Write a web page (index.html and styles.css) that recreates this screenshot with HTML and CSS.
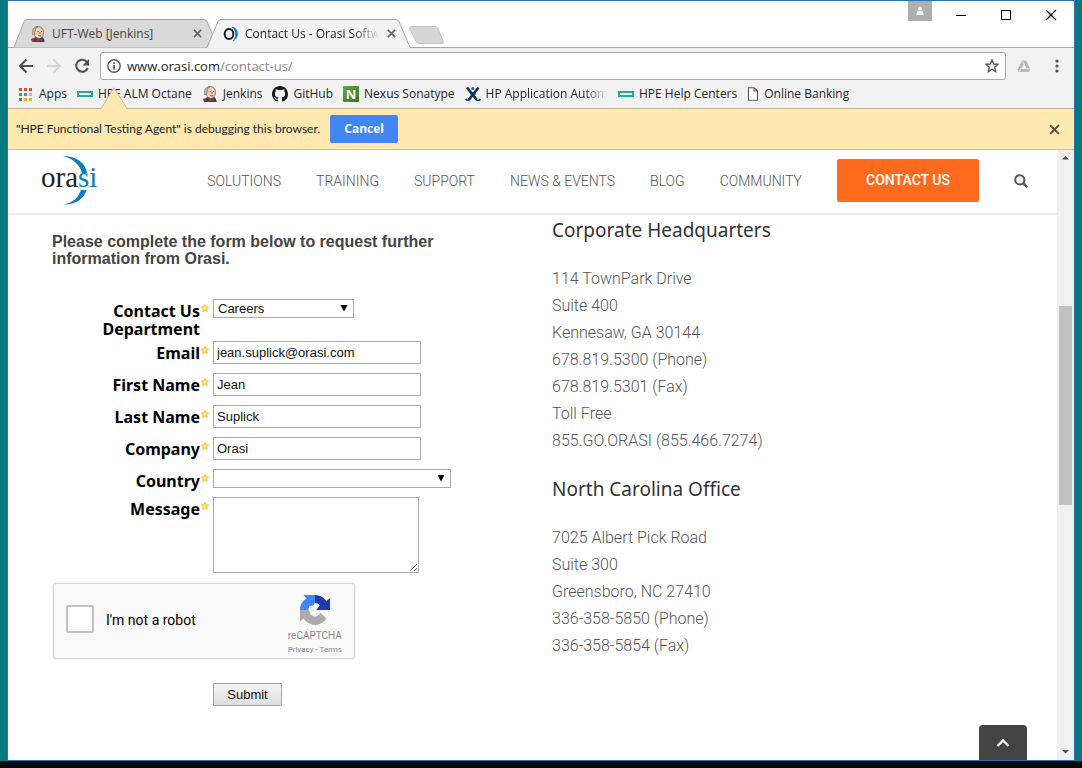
FILE: index.html
```html
<!DOCTYPE html>
<html lang="en">
<head>
<meta charset="utf-8">
<meta name="viewport" content="width=device-width, initial-scale=1">
<title>Contact Us - Orasi Software</title>
<link rel="stylesheet" href="styles.css">
</head>
<body class="desktop">
<svg class="defs" width="0" height="0" aria-hidden="true">
  <defs>
    <symbol id="jenkins" viewBox="0 0 16 16">
      <path d="M2 16c0-3 2-4.500 4-5l5-.5c2 .6 3.500 2.500 3.600 5.500z" fill="#3c434d"/>
      <path d="M3.500 5C3.500 2 5.500.6 8.500.6S13.600 3 13.500 6.500c0 3.200-2 6-4.600 6S3.500 9.500 3.500 5z" fill="#eccfb8" stroke="#4a4038" stroke-width=".6"/>
      <path d="M2.800 9C1.300 4 4 .6 8 .6c-2 .8-2.400 2-2.400 3.400 0 1.500-1 2-1 4z" fill="#cbbba9" stroke="#5c5047" stroke-width=".5"/>
      <path d="M7.500 5.500h1.200M11 5.500h1.200M8.300 9.300c1 .7 2.200.7 3 .1M10 6v1.700" fill="none" stroke="#46342b" stroke-width=".8"/>
      <path d="M6.500 12.500l2.500 1 2.700-1V15L9 14.200 6.500 15.400z" fill="#a8423b"/>
      <path d="M1 13l2.500-1 1 3-2.500 1z" fill="#b32c2b"/>
    </symbol>
    <symbol id="hpe" viewBox="0 0 16 6">
      <path d="M1 1h14v4H1z" fill="#fff" stroke="#1faf91" stroke-width="2"/>
    </symbol>
    <symbol id="star" viewBox="0 0 8 8">
      <path d="M4 .3l1.100 2.300 2.600.4-1.900 1.900.5 2.700L4 6.400 1.700 7.600l.5-2.700L.3 3l2.600-.4z" fill="#ffe27a" stroke="#f3bd35" stroke-width=".8"/>
    </symbol>
    <symbol id="cross" viewBox="0 0 10 10">
      <path d="M1 1l8 8M9 1L1 9" fill="none" stroke="currentColor" stroke-width="1.800"/>
    </symbol>
    <symbol id="down" viewBox="0 0 8 8"><path d="M.5 1h7L4 7.500z" fill="#000"/></symbol>
  </defs>
</svg>

<div class="window">
  <div class="tabstrip">
    <div class="tab">
      <svg class="tab-shape" viewBox="0 0 206 29" preserveAspectRatio="none" aria-hidden="true"><path d="M0 28.500h1L11 2.500Q12 .5 14 .5H191Q193 .5 194 2.500L205 28.500h1" fill="#d9d9d9" stroke="#a3a3a3"/></svg>
      <svg class="favicon" aria-hidden="true"><use href="#jenkins"/></svg>
      <span class="tab-title">UFT-Web [Jenkins]</span>
      <button class="tab-close" aria-label="Close tab"><svg width="9" height="9"><use href="#cross"/></svg></button>
    </div>
    <div class="tab tab-active">
      <svg class="tab-shape" viewBox="0 0 206 29" preserveAspectRatio="none" aria-hidden="true"><path d="M0 29v-.5h1L12 2.500Q13 .5 15 .5H190Q192 .5 193 2.500L204 28.500h2v.5z" fill="#f2f2f2"/><path d="M0 28.500h1L12 2.500Q13 .5 15 .5H190Q192 .5 193 2.500L204 28.500h2" fill="none" stroke="#a3a3a3"/></svg>
      <svg class="favicon" viewBox="0 0 16 16" aria-hidden="true"><ellipse cx="6" cy="8" rx="4.400" ry="5" fill="none" stroke="#111" stroke-width="1.900"/><path d="M9 .8c6 1.200 8.500 9.600 1 14.400 3.800-4.500 3.500-10.500-1-14.400z" fill="#1379bd" stroke="#1379bd" stroke-width=".6"/></svg>
      <span class="tab-title tab-title-long">Contact Us - Orasi Softw</span>
      <button class="tab-close" aria-label="Close tab"><svg width="9" height="9"><use href="#cross"/></svg></button>
    </div>
    <button class="new-tab" aria-label="New tab"><svg width="35" height="18" viewBox="0 0 35 18"><path d="M2 .5h24q2 0 3 2l5 12q1 3-1 3H10q-2 0-3-2L1 3Q0 .5 2 .5z" fill="#d5d5d5" stroke="#c4c4c4"/></svg></button>
    <div class="controls">
      <button class="profile" aria-label="Profile"><svg width="8" height="10" viewBox="0 0 8 10"><circle cx="4" cy="2.500" r="2" fill="#fff"/><path d="M.5 9V7.500C.5 5.500 2 5 4 5s3.500.5 3.500 2.500V9z" fill="#fff"/></svg></button>
      <button class="control" aria-label="Minimize"><svg width="12" height="12"><path d="M1 6.500h10" stroke="#000"/></svg></button>
      <button class="control" aria-label="Maximize"><svg width="12" height="12"><path d="M1.500 1.500h9v9h-9z" fill="none" stroke="#000"/></svg></button>
      <button class="control" aria-label="Close"><svg width="12" height="12"><path d="M1 1l10 10M11 1L1 11" stroke="#000" stroke-width="1.200"/></svg></button>
    </div>
  </div>

  <div class="toolbar">
    <button class="tool" aria-label="Back"><svg width="16" height="16" viewBox="0 0 16 16"><path d="M15 8H2M8.500 1.500L2 8l6.500 6.500" fill="none" stroke="#505050" stroke-width="2"/></svg></button>
    <button class="tool" aria-label="Forward"><svg width="16" height="16" viewBox="0 0 16 16"><path d="M1 8h13M7.500 1.500L14 8l-6.500 6.500" fill="none" stroke="#d3d3d3" stroke-width="2"/></svg></button>
    <button class="tool" aria-label="Reload"><svg width="16" height="16" viewBox="0 0 16 16"><path d="M13 4A6 6 0 1 0 13.800 10" fill="none" stroke="#505050" stroke-width="2.100"/><path d="M15 1v6.500H8.500z" fill="#505050"/></svg></button>
    <div class="omnibox">
      <svg width="16" height="16" viewBox="0 0 16 16" aria-hidden="true"><circle cx="8" cy="8" r="6.200" fill="none" stroke="#555" stroke-width="1.400"/><path d="M8 7v4.500M8 4.300v1.600" stroke="#555" stroke-width="1.700"/></svg>
      <span class="url">www.orasi.com<span class="url-path">/contact-us/</span></span>
      <button class="bare" aria-label="Bookmark this page"><svg width="16" height="16" viewBox="0 0 16 16"><path d="M8 2l1.700 4 4.300.4-3.300 2.900 1 4.200L8 11.300l-3.700 2.200 1-4.200L2 6.400 6.300 6z" fill="none" stroke="#555" stroke-width="1.400"/></svg></button>
    </div>
    <button class="tool" aria-label="Drive"><svg width="16" height="16" viewBox="0 0 16 16"><path d="M6 2.500h4l4.500 9-1.500 2.500H3l-1.500-2.500z" fill="#b9b9b9"/><path d="M8 6l2.800 5H5.200z" fill="#f2f2f2"/><path d="M6 2.500L8.500 7M11 11h4M3 14l2.500-4" stroke="#e5e5e5"/></svg></button>
    <button class="tool" aria-label="Menu"><svg width="16" height="16" viewBox="0 0 16 16"><g fill="#505050"><circle cx="8" cy="3" r="1.600"/><circle cx="8" cy="8" r="1.600"/><circle cx="8" cy="13" r="1.600"/></g></svg></button>
  </div>

  <nav class="bookmarks" aria-label="Bookmarks">
    <a class="bookmark" href="#"><svg width="16" height="15" viewBox="0 0 16 15"><path d="M1 1h3v3H1zM6 1h3v3H6zM11 1h3v3h-3z" fill="#dc4b3e"/><path d="M1 6h3v3H1z" fill="#32a350"/><path d="M6 6h3v3H6z" fill="#4285f4"/><path d="M11 6h3v3h-3z" fill="#f2b01e"/><path d="M1 11h3v3H1z" fill="#32a350"/><path d="M6 11h3v3H6zM11 11h3v3h-3z" fill="#f2b01e"/></svg>Apps</a>
    <a class="bookmark" href="#"><svg width="16" height="6"><use href="#hpe"/></svg>HPE ALM Octane</a>
    <a class="bookmark" href="#"><svg width="16" height="16"><use href="#jenkins"/></svg>Jenkins</a>
    <a class="bookmark" href="#"><svg width="16" height="16" viewBox="0 0 16 16"><path fill="#191717" d="M8 0C3.580 0 0 3.580 0 8c0 3.540 2.290 6.530 5.470 7.590.4.070.55-.17.55-.38 0-.19-.01-.82-.01-1.490-2.010.37-2.530-.49-2.690-.94-.09-.23-.48-.94-.82-1.130-.28-.15-.68-.52-.01-.53.63-.01 1.080.58 1.230.82.720 1.210 1.870.87 2.330.66.070-.52.280-.87.510-1.070-1.780-.2-3.640-.89-3.640-3.950 0-.87.310-1.590.82-2.150-.08-.2-.36-1.020.08-2.120 0 0 .67-.21 2.200.82A7.600 7.600 0 0 1 8 3.860c.68 0 1.360.09 2 .27 1.530-1.040 2.200-.82 2.200-.82.440 1.100.160 1.920.080 2.120.510.560.820 1.270.820 2.150 0 3.070-1.870 3.750-3.650 3.950.290.250.540.730.540 1.480 0 1.070-.01 1.930-.01 2.200 0 .21.150.46.550.38A8 8 0 0 0 16 8c0-4.420-3.580-8-8-8z"/></svg>GitHub</a>
    <a class="bookmark" href="#"><span class="nexus-icon" aria-hidden="true">N</span>Nexus Sonatype</a>
    <a class="bookmark" href="#"><svg width="16" height="16" viewBox="0 0 16 16"><path d="M2 1.500l9.500 12M13.500 1.500L4 13.500" stroke="#12305c" stroke-width="2.600"/><path d="M5.500 7.500h5" stroke="#12305c" stroke-width="2.500"/><circle cx="7.800" cy="2.500" r="1.600" fill="#2e5c94"/><path d="M.5 13q2.500 2.500 4.500 0M10.500 13q2.500 3 5 0" fill="none" stroke="#12305c" stroke-width="1.700"/></svg><span class="fade">HP Application Autom</span></a>
    <a class="bookmark" href="#"><svg width="16" height="6"><use href="#hpe"/></svg>HPE Help Centers</a>
    <a class="bookmark" href="#"><svg width="12" height="14" viewBox="0 0 12 14"><path d="M1.500.7h5.500L10.500 4v9.300h-9zM7 .7V4h3.500" fill="#fff" stroke="#555" stroke-width="1.100"/></svg>Online Banking</a>
  </nav>

  <div class="infobar">
    <svg class="infobar-arrow" width="28" height="23" viewBox="0 0 28 23" aria-hidden="true"><path d="M0 23v-1L1 21.500 14 .8 27 21.500l1 .5v1z" fill="#ffe9b1"/><path d="M0 22l1-.5L14 .8 27 21.500l1 .5" fill="none" stroke="#c9bb97"/></svg>
    <span class="infobar-text">"HPE Functional Testing Agent" is debugging this browser.</span>
    <button class="cancel">Cancel</button>
    <button class="bare infobar-close" aria-label="Dismiss"><svg width="11" height="11"><use href="#cross"/></svg></button>
  </div>

  <div class="viewport">
    <div class="page">
      <header class="site-header">
        <svg class="logo" width="58" height="52" viewBox="0 0 58 52" role="img" aria-label="orasi">
          <path d="M22 1C35 1 45 8 46 18H41C39 10 33 4 22 1zM22 49.500C35 50 43.500 43 45.500 35H40C37 43 32 48 22 49.500z" fill="#0b7cb8"/>
          <text x="0" y="32" class="logo-text">ora<tspan class="logo-blue">si</tspan></text>
        </svg>
        <nav class="site-nav">
          <a href="#">SOLUTIONS</a><a href="#">TRAINING</a><a href="#">SUPPORT</a><a href="#">NEWS &amp; EVENTS</a><a href="#">BLOG</a><a href="#">COMMUNITY</a>
          <a href="#" class="contact-link">CONTACT US</a>
          <button class="bare" aria-label="Search"><svg width="14" height="14" viewBox="0 0 14 14"><circle cx="5.800" cy="5.800" r="4.600" fill="none" stroke="#555" stroke-width="2"/><path d="M9.200 9.200l4 4" stroke="#555" stroke-width="2.400"/></svg></button>
        </nav>
      </header>

      <main class="content">
        <form class="form">
          <h2 class="form-title">Please complete the form below to request further information from Orasi.</h2>
          <div class="row">
            <label for="dept">Contact Us Department</label><svg class="required"><use href="#star"/></svg>
            <div class="field"><div class="select select-short"><select id="dept"><option>Careers</option></select><svg class="select-arrow"><use href="#down"/></svg></div></div>
          </div>
          <div class="row">
            <label for="email">Email</label><svg class="required"><use href="#star"/></svg>
            <div class="field"><input class="text" id="email" type="text" value="jean.suplick@orasi.com"></div>
          </div>
          <div class="row">
            <label for="first">First Name</label><svg class="required"><use href="#star"/></svg>
            <div class="field"><input class="text" id="first" type="text" value="Jean"></div>
          </div>
          <div class="row">
            <label for="last">Last Name</label><svg class="required"><use href="#star"/></svg>
            <div class="field"><input class="text" id="last" type="text" value="Suplick"></div>
          </div>
          <div class="row">
            <label for="company">Company</label><svg class="required"><use href="#star"/></svg>
            <div class="field"><input class="text" id="company" type="text" value="Orasi"></div>
          </div>
          <div class="row">
            <label for="country">Country</label><svg class="required"><use href="#star"/></svg>
            <div class="field"><div class="select"><select id="country"><option></option></select><svg class="select-arrow"><use href="#down"/></svg></div></div>
          </div>
          <div class="row">
            <label for="message">Message</label><svg class="required"><use href="#star"/></svg>
            <div class="field"><textarea class="message" id="message"></textarea></div>
          </div>
          <div class="captcha">
            <input class="captcha-box" id="robot" type="checkbox">
            <label for="robot">I'm not a robot</label>
            <div class="captcha-brand">
              <svg width="32" height="32" viewBox="0 0 32 32" aria-hidden="true">
                <path d="M31 16V4l-3.500 3.200C24.500 3 20.500 1 16 1v8c2 0 3.500.8 4.500 2.500L17 16z" fill="#1c3aa9"/>
                <path d="M16 1H4.500l3 3.500C3 7.500 1 11 1 16h8.500c0-2 .5-3.500 1.500-4.500l3 2.500L16 9z" fill="#4285f4"/>
                <path d="M1 16v11.500l3.500-3c6 8.500 17.500 8.500 23 0L21.500 19c-3 4.500-7.500 4.500-10.500 1L14.500 16z" fill="#ababab"/>
                <path d="M9.500 16c.2-2.500 2-4.500 4.500-4.500L16 9l4.500 2.500L17 16l3.500 2.500c-2 3-6.500 3-9 .5z" fill="#f9f9f9"/>
              </svg>
              <span class="captcha-name">reCAPTCHA</span>
              <span class="captcha-terms"><a href="#">Privacy</a> - <a href="#">Terms</a></span>
            </div>
          </div>
          <button class="submit" type="submit">Submit</button>
        </form>

        <section class="offices">
          <h3>Corporate Headquarters</h3>
          <address>114 TownPark Drive<br>Suite 400<br>Kennesaw, GA 30144<br>678.819.5300 (Phone)<br>678.819.5301 (Fax)<br>Toll Free<br>855.GO.ORASI (855.466.7274)</address>
          <h3>North Carolina Office</h3>
          <address>7025 Albert Pick Road<br>Suite 300<br>Greensboro, NC 27410<br>336-358-5850 (Phone)<br>336-358-5854 (Fax)</address>
        </section>
      </main>
      <button class="to-top" aria-label="Back to top"><svg width="14" height="10" viewBox="0 0 14 10"><path d="M1.500 8L7 2.500 12.500 8" fill="none" stroke="#fff" stroke-width="2.400"/></svg></button>
    </div>
    <div class="scrollbar" aria-hidden="true">
      <svg width="17" height="17"><path d="M5 9.500h7L8.500 6z" fill="#505050"/></svg>
      <div class="scroll-before"></div>
      <div class="thumb"></div>
      <div class="scroll-after"></div>
      <svg width="17" height="17"><path d="M5 7h7l-3.500 3.500z" fill="#505050"/></svg>
    </div>
  </div>
</div>
</body>
</html>
```
FILE: styles.css
```css
* { box-sizing: border-box; }

button, input, select, textarea { font: inherit; color: inherit; }
a { color: inherit; text-decoration: none; }
svg { display: block; flex: none; }

.defs { position: absolute; }

.desktop {
  margin: 0;
  height: 100vh;
  padding: 0 7px 7px;
  background: linear-gradient(#04070c, #04070c) bottom / 100% 7px no-repeat, #067a7e;
  overflow: hidden;
}

.window {
  height: 100%;
  display: flex;
  flex-direction: column;
  border: 1px solid #2b74ad;
  background: #fff;
  font: 12px/16px "Open Sans", "Noto Sans", sans-serif;
  color: #222;
}

.bare, .tool, .control, .tab-close, .new-tab, .profile {
  display: grid;
  place-items: center;
  padding: 0;
  border: 0;
  background: none;
}

/* Tabs and window controls */
.tabstrip {
  position: relative;
  display: flex;
  align-items: flex-end;
  flex: none;
  height: 47px;
  padding-left: 5px;
  border-bottom: 1px solid #a9a9a9;
}

.tab {
  position: relative;
  display: flex;
  align-items: center;
  gap: 6px;
  width: 206px;
  height: 29px;
  margin-bottom: -1px;
  padding: 0 15px 0 17px;
}

.tab-active { margin-left: -13px; }
.tab-shape { position: absolute; inset: 0; width: 100%; height: 100%; }
.favicon { position: relative; width: 16px; height: 16px; }

.tab-title {
  position: relative;
  flex: 1;
  white-space: nowrap;
  color: #444;
}

.tab-title-long {
  color: #222;
  mask-image: linear-gradient(to right, #000 80%, transparent);
}

.tab-close { position: relative; width: 13px; height: 16px; color: #666; }
.tab-close svg, .infobar-close svg { overflow: visible; }
.new-tab { margin: 0 0 3px -3px; }

.controls {
  display: flex;
  align-items: flex-start;
  align-self: flex-start;
  margin-left: auto;
}

.profile { width: 24px; height: 20px; background: #afafaf; }
.control { width: 45px; height: 28px; }
.profile + .control { margin-left: 6px; }
.control:last-child { margin-right: 1px; }

/* Toolbar */
.toolbar {
  display: flex;
  align-items: center;
  gap: 12px;
  flex: none;
  padding: 4px 9px 0 10px;
  background: #f2f2f2;
}

.tool { width: 16px; height: 28px; }
.tool:last-child { margin-left: 5px; }

.omnibox {
  display: flex;
  align-items: center;
  gap: 5px;
  flex: 1;
  height: 28px;
  margin: 0 -2px;
  padding: 0 5px;
  border: 1px solid #a9a9a9;
  border-radius: 3px;
  background: #fff;
  font-size: 13px;
}

.url { flex: 1; color: #222; }
.url-path { color: #888; }

/* Bookmarks */
.bookmarks {
  display: flex;
  align-items: center;
  gap: 10px;
  flex: none;
  height: 29px;
  padding: 0 10px;
  border-bottom: 1px solid #c2b48f;
  background: #f2f2f2;
  white-space: nowrap;
}

.bookmark { display: flex; align-items: center; gap: 5px; }

.nexus-icon {
  display: grid;
  place-items: center;
  width: 16px;
  height: 16px;
  border-radius: 1px;
  background: linear-gradient(135deg, #6aa63c, #34741c);
  color: #fff;
  font: bold 13px/16px "Open Sans", sans-serif;
}

.fade { mask-image: linear-gradient(to right, #000 80%, transparent); }

/* Debugging notice */
.infobar {
  position: relative;
  display: flex;
  align-items: center;
  gap: 10px;
  flex: none;
  height: 41px;
  padding: 0 14px 0 8px;
  border-bottom: 1px solid #c5c1b2;
  background: #ffe9b1;
}

.infobar-arrow { position: absolute; left: 92px; top: -22px; }
.infobar-text { font-family: Lato, "Open Sans", sans-serif; }

.cancel {
  width: 68px;
  height: 28px;
  padding: 0;
  border: 0;
  border-radius: 2px;
  background: #4285f4;
  color: #fff;
  font-weight: 700;
}

.infobar-close { margin-left: auto; color: #55503f; }

/* Page */
.viewport { display: flex; flex: 1; min-height: 0; }

.page {
  position: relative;
  flex: 1;
  overflow: hidden;
  font-family: Roboto, sans-serif;
}

.site-header {
  display: flex;
  align-items: center;
  justify-content: space-between;
  height: 65px;
  padding: 0 29px 2px 33px;
  border-bottom: 2px solid #ececec;
}

.logo { overflow: visible; }
.logo-text { font: 29px "Liberation Serif", serif; fill: #222; }
.logo-blue { fill: #0b7cb8; }

.site-nav {
  display: flex;
  align-items: center;
  gap: 35px;
  font-size: 14px;
  font-weight: 300;
  color: #555;
}

.contact-link {
  width: 142px;
  padding: 13px 0 14px;
  border-radius: 2px;
  background: #ff6a1c;
  color: #fff;
  font-weight: 500;
  text-align: center;
}

.content {
  display: grid;
  grid-template-columns: 500px 1fr;
  padding: 1px 30px 0 44px;
}

/* Request form */
.form { padding-top: 17px; font: 13px/16px "Liberation Sans", Arial, sans-serif; color: #111; }

.form-title {
  max-width: 400px;
  margin: 0 0 32px;
  font-size: 16px;
  line-height: 17px;
  color: #444;
}

.row {
  display: grid;
  grid-template-columns: 148px 8px 1fr;
  column-gap: 1px;
  margin-bottom: 3px;
}

.row label {
  padding: 3px 0 0 40px;
  font: bold 16px/18px "Noto Sans", "Open Sans", sans-serif;
  color: #000;
  text-align: right;
}

.required { width: 8px; height: 8px; margin-top: 5px; }
.field { padding: 0 0 6px 3px; }

.text {
  display: block;
  width: 208px;
  height: 23px;
  padding: 0 3px;
  border: 1px solid #a9a9a9;
  background: #fff;
}

.select { position: relative; width: 238px; }
.select-short { width: 141px; }

.select select {
  display: block;
  width: 100%;
  height: 19px;
  padding: 0 4px;
  border: 1px solid #a9a9a9;
  border-radius: 0;
  background: #fff;
  appearance: none;
}

.select-arrow { position: absolute; right: 6px; top: 5px; width: 8px; height: 8px; pointer-events: none; }

.message {
  display: block;
  width: 206px;
  height: 76px;
  border: 1px solid #a9a9a9;
  background: #fff;
  resize: both;
}

.captcha {
  display: flex;
  align-items: center;
  width: 302px;
  height: 76px;
  margin: 4px 0 24px 1px;
  padding: 0 12px;
  border: 1px solid #d3d3d3;
  border-radius: 3px;
  background: #f9f9f9;
  box-shadow: 0 0 3px rgba(0, 0, 0, .1);
  font: 14px/17px Roboto, sans-serif;
  color: #000;
}

.captcha-box {
  appearance: none;
  width: 28px;
  height: 28px;
  margin: 0 12px 5px 0;
  border: 2px solid #c1c1c1;
  border-radius: 2px;
  background: #fff;
}

.captcha label { margin-bottom: 2px; }

.captcha-brand {
  display: flex;
  flex-direction: column;
  align-items: center;
  margin: 8px 0 0 auto;
  color: #888;
}

.captcha-name { margin-top: 2px; font-size: 10px; line-height: 15px; }
.captcha-terms { font-size: 8px; line-height: 14px; }

.submit {
  display: block;
  width: 69px;
  height: 23px;
  margin-left: 161px;
  padding: 0;
  border: 1px solid #a0a0a0;
  border-radius: 1px;
  background: linear-gradient(#f6f6f6, #dedede);
}

/* Offices */
.offices h3 {
  margin: 0 0 21px;
  font: 19px/28px "Noto Sans", sans-serif;
  color: #333;
}

.offices address {
  margin-bottom: 21px;
  font: 300 16px/27px Roboto, sans-serif;
  color: #555;
}

.to-top {
  position: absolute;
  right: 30px;
  bottom: 0;
  display: grid;
  place-items: center;
  width: 48px;
  height: 35px;
  padding: 0;
  border: 0;
  border-radius: 4px 4px 0 0;
  background: #444;
}

/* Scrollbar */
.scrollbar {
  display: flex;
  flex-direction: column;
  flex: none;
  width: 17px;
  background: #f0f0f0;
}

.scroll-before { flex: 139; }
.thumb { flex: 199; margin: 0 2px; background: #c1c1c1; }
.scroll-after { flex: 238; }
```
